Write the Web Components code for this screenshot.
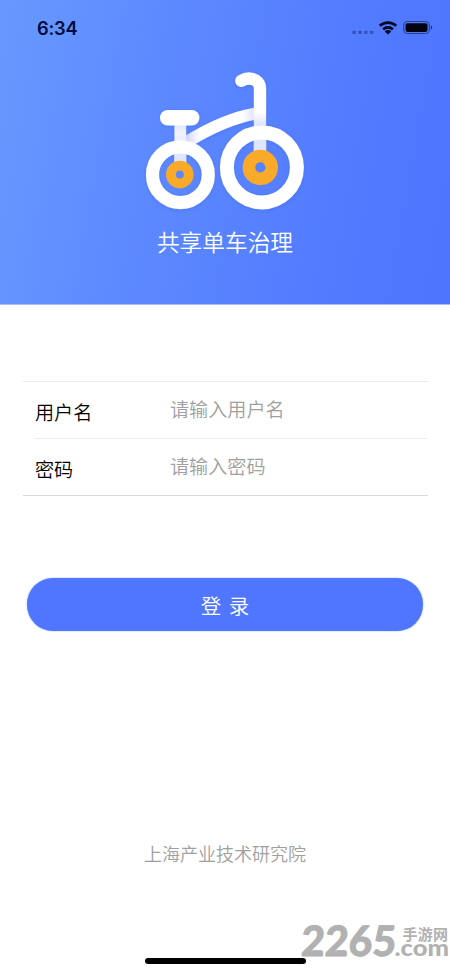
<!DOCTYPE html>
<html lang="zh-CN">
<head>
<meta charset="utf-8">
<title>共享单车治理</title>
<style>
html,body{margin:0;padding:0;background:#fff}
body{font-family:"Noto Sans CJK SC",sans-serif;font-weight:350}
</style>
</head>
<body>
<login-app></login-app>
<script>
const define = (name, html) => {
  const t = document.createElement('template');
  t.innerHTML = html;
  customElements.define(name, class extends HTMLElement {
    constructor() {
      super();
      this.attachShadow({mode: 'open'}).appendChild(t.content.cloneNode(true));
    }
  });
};

define('status-bar', `
<style>
:host{display:flex;justify-content:space-between;align-items:center;height:56px;padding:0 17px 0 37px;box-sizing:border-box;color:#050b3c}
.time{font:600 18.3px/24px Inter,sans-serif;letter-spacing:-.2px}
svg{display:block}
</style>
<span class="time"><slot></slot></span>
<svg width="82" height="20" viewBox="351 18 82 20">
  <g fill="#3553b8"><rect x="352.3" y="30.7" width="3.6" height="3.4" rx="1"/><rect x="358.2" y="30.7" width="3.6" height="3.4" rx="1"/><rect x="364.1" y="30.7" width="3.6" height="3.4" rx="1"/><rect x="369.8" y="30.7" width="3.6" height="3.4" rx="1"/></g>
  <g fill="none" stroke="#020722" stroke-width="2.7"><path d="M379.8 25.8a12 12 0 0 1 16.4 0"/><path d="M383.1 29.4a7 7 0 0 1 9.8 0"/></g>
  <path d="M388 34.4l-3.2-3a4.5 4.5 0 0 1 6.4 0z" fill="#020722"/>
  <rect x="403.7" y="21.5" width="25.6" height="12" rx="3.5" fill="none" stroke="#293f8c" stroke-width="1"/>
  <rect x="405.5" y="23.2" width="22" height="8.7" rx="1.8" fill="#020410"/>
  <path d="M430.8 25.4a2.4 2.4 0 0 1 0 4.4z" fill="#1d3074"/>
</svg>`);

define('bike-logo', `
<style>
:host{display:block;width:170px;height:152px}
svg{display:block;overflow:visible}
</style>
<svg width="170" height="152" viewBox="140 64 170 152">
  <defs>
    <linearGradient id="post" x1="0" y1="0" x2="0" y2="1"><stop offset="0" stop-color="#d5dcf9"/><stop offset=".25" stop-color="#f0f2fe"/><stop offset="1" stop-color="#dfe5fc"/></linearGradient>
    <linearGradient id="stem" gradientUnits="userSpaceOnUse" x1="0" y1="72" x2="0" y2="152"><stop offset="0" stop-color="#fff"/><stop offset=".5" stop-color="#fff"/><stop offset=".68" stop-color="#dbe1fa"/><stop offset="1" stop-color="#e6eafd"/></linearGradient>
    <linearGradient id="frame" gradientUnits="userSpaceOnUse" x1="186" y1="0" x2="256" y2="0"><stop offset="0" stop-color="#cfd7f8"/><stop offset=".2" stop-color="#fff"/><stop offset=".8" stop-color="#fff"/><stop offset="1" stop-color="#dbe1fa"/></linearGradient>
    <filter id="shade" x="-20%" y="-20%" width="140%" height="150%"><feDropShadow dx="0" dy="1" stdDeviation="1.8" flood-color="#2545bb" flood-opacity=".2"/></filter>
  </defs>
  <g filter="url(#shade)">
    <path d="M186 142.5Q224 119 256 113.5" fill="none" stroke="url(#frame)" stroke-width="12.3"/>
    <rect x="174.4" y="121" width="11.8" height="43" fill="url(#post)"/>
    <rect x="160" y="110" width="39.4" height="15.5" rx="7.6" fill="#fff"/>
    <path d="M241.3 80.8C247 77.4 252 78.2 255.5 80.3Q260 83.5 260 88V152" fill="none" stroke="url(#stem)" stroke-width="12.3" stroke-linecap="round"/>
    <circle cx="180.4" cy="174.7" r="27.9" fill="none" stroke="#fff" stroke-width="13.2"/>
    <circle cx="261.9" cy="167.4" r="35" fill="none" stroke="#fff" stroke-width="14"/>
  </g>
  <rect x="174.4" y="154" width="11.8" height="9" fill="#dfe5fc"/>
  <rect x="253.8" y="140" width="12.3" height="14" fill="#dfe5fb"/>
  <circle cx="179.8" cy="174.6" r="8.9" fill="none" stroke="#f9aa29" stroke-width="9.8"/>
  <circle cx="260.3" cy="167.4" r="11.4" fill="none" stroke="#f9aa29" stroke-width="12.6"/>
</svg>`);

define('hero-panel', `
<style>
:host{display:flex;flex-direction:column;align-items:center;height:305px;background:linear-gradient(100deg,#6799ff 0%,#5d89ff 35%,#5079ff 80%,#4d75ff 100%);border-bottom:1px solid #a9bdfa;box-sizing:border-box}
status-bar{align-self:stretch}
bike-logo{margin-top:8px}
h1{margin:9px 0 0;color:#fff;font-size:22.7px;line-height:34px;font-weight:350;white-space:nowrap}
</style>
<status-bar>6:34</status-bar><bike-logo></bike-logo><h1><slot></slot></h1>`);

define('form-field', `
<style>
:host{display:grid;grid-template-columns:135px 1fr;height:56px;font-size:19.1px;line-height:28px}
.label{color:#000;padding-top:16px;font-weight:350}
.hint{color:#a0a0a0;padding-top:13px}
</style>
<span class="label"><slot name="label"></slot></span><span class="hint"><slot></slot></span>`);

define('field-list', `
<style>
:host{display:block;border-top:1px solid #e9e9e9;border-bottom:1px solid #d9d9d9;padding-left:12px}
::slotted(form-field:first-child){border-bottom:1px solid #eee}
</style><slot></slot>`);

define('submit-button', `
<style>
:host{display:block}
button{display:block;width:100%;height:53px;border:0;padding:1px 0 0;border-radius:26px;background:#5076ff;color:#fff;font:350 20.5px/52px "Noto Sans CJK SC",sans-serif;box-shadow:0 0 2px #9bb8ff;word-spacing:3px}
</style><button><slot></slot></button>`);

define('site-mark', `
<style>:host{display:block;width:150px;height:44px}svg{display:block;overflow:visible}</style>
<svg width="150" height="44" viewBox="300 920 150 44" fill="#b1b1b1">
  <g font-family="Lato,sans-serif" font-weight="900" font-size="42" stroke="#b1b1b1" stroke-width=".8" stroke-linejoin="round">
    <text transform="translate(300.5 956) skewX(-3)" textLength="95" lengthAdjust="spacingAndGlyphs">2265</text>
  </g>
  <text x="402.5" y="939.5" font-family="Noto Sans CJK SC,sans-serif" font-weight="700" font-size="15" textLength="45.5">手游网</text>
  <text x="394.5" y="956" font-family="Lato,sans-serif" font-weight="900" font-size="23" textLength="54.5" lengthAdjust="spacingAndGlyphs">.com</text>
</svg>`);

define('login-app', `
<style>
:host{display:flex;flex-direction:column;width:450px;height:974px;overflow:hidden;background:#fff}
field-list{margin:76px 22px 0 23px}
submit-button{margin:82px 27px 0}
footer{margin-top:208px;text-align:center;font-size:18px;line-height:28px;color:#a0a0a0}
.bottom{display:grid;grid-template-columns:145px 161px 1fr;height:62px;margin-top:auto}
.home{grid-area:1/2;align-self:start;margin-top:46px;height:6px;border-radius:3px;background:#000}
site-mark{grid-area:1/1/2/4;justify-self:end;margin-top:8px}
</style>
<hero-panel>共享单车治理</hero-panel>
<field-list>
  <form-field><span slot="label">用户名</span>请输入用户名</form-field>
  <form-field><span slot="label">密码</span>请输入密码</form-field>
</field-list>
<submit-button>登 录</submit-button>
<footer>上海产业技术研究院</footer>
<div class="bottom"><div class="home"></div><site-mark></site-mark></div>`);
</script>
</body>
</html>
